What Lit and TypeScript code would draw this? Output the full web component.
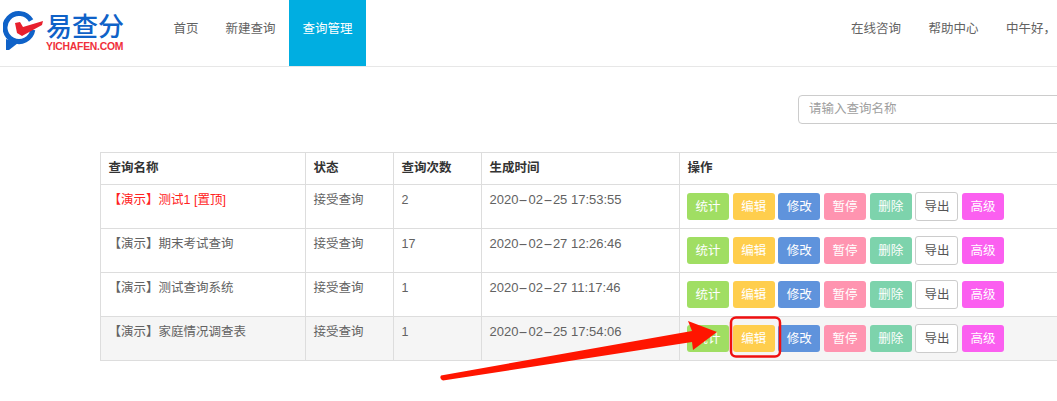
import { LitElement, html, css } from "lit";
import { customElement } from "lit/decorators.js";

const ROWS = [
  { name: "【演示】测试1 [置顶]", count: "2", time: "2020-02-25 17:53:55", top: true },
  { name: "【演示】期末考试查询", count: "17", time: "2020-02-27 12:26:46" },
  { name: "【演示】测试查询系统", count: "1", time: "2020-02-27 11:17:46" },
  { name: "【演示】家庭情况调查表", count: "1", time: "2020-02-25 17:54:06", hover: true },
];
const BTNS = [
  ["统计", "green"], ["编辑", "yellow"], ["修改", "blue"], ["暂停", "pink"],
  ["删除", "teal"], ["导出", "white"], ["高级", "magenta"],
];

@customElement("app-root")
export class AppRoot extends LitElement {
  static styles = css`
    :host {
      display: block; position: relative; width: 1057px; height: 401px; overflow: hidden; background: #fff;
      font-family: "Liberation Sans", "Noto Sans CJK SC", sans-serif; font-size: 12.5px; color: #626262;
    }
    header { display: flex; height: 66px; border-bottom: 1px solid #e7e7e7; }
    .logo { width: 160px; flex: none; display: flex; padding: 8px 0 0 3px; box-sizing: border-box; height: 66px; }
    .logo svg { flex: none; }
    .brand { display: flex; flex-direction: column; }
    .cn { font-family: "Noto Sans CJK SC", sans-serif; font-size: 26px; line-height: 27px; height: 30px; font-weight: 500; color: #0f62c8; margin-top: 3px; }
    .en { font-size: 10.4px; line-height: 10px; color: #f0303a; font-weight: 700; margin-top: 1px; letter-spacing: -0.25px; }
    nav { display: flex; align-items: stretch; }
    .item { padding: 0 13.5px; line-height: 58px; height: 66px; box-sizing: border-box; white-space: nowrap; }
    .item.on { background: #00aee1; color: #fff; }
    .right { margin-left: auto; margin-right: 1px; display: flex; }
    .right .item { padding: 0 0 0 27.5px; }
    .main { padding: 28px 0 0 100px; }
    .search { margin-left: 698px; width: 300px; height: 29px; border: 1px solid #ccc; border-radius: 4px; box-sizing: border-box; padding-left: 10px; line-height: 26px; color: #a0a0a0; }
    table { border-collapse: collapse; table-layout: fixed; width: 1000px; margin-top: 28px; }
    th, td { border: 1px solid #ddd; padding: 0 7.5px; text-align: left; vertical-align: top; box-sizing: border-box; }
    th { height: 32px; font-weight: 700; color: #333; line-height: 30px; }
    td { height: 44px; line-height: 30px; }
    tr.top .n { color: #f22; }
    tr.hover td { background: #f5f5f5; }
    .t { font-size: 13px; white-space: nowrap; }
    .h { display: inline-block; width: 10px; text-align: center; transform: scaleX(2.2); }
    td.ops { padding: 8px 0 0 7px; }
    .btns { display: flex; gap: 3.7px; }
    .b { width: 42px; height: 27px; border-radius: 3px; color: #fff; text-align: center; line-height: 28px; box-sizing: border-box; flex: none; }
    .green { background: #a0de63; }
    .yellow { background: #ffce4d; }
    .blue { background: #5f93dc; }
    .pink { background: #ff94b0; }
    .teal { background: #7dd3ac; }
    .white { background: #fff; border: 1px solid #ccc; color: #555; width: 43px; height: 29px; margin-top: -1px; }
    .magenta { background: #fb5ff0; }
    .arrow { position: absolute; left: 0; top: 0; pointer-events: none; }
  `;

  private time(t: string) {
    const parts = t.split("-");
    return parts.map((p, i) => html`${i ? html`<span class="h">-</span>` : ""}${p}`);
  }

  render() {
    return html`
      <header>
        <div class="logo">
          <svg width="43" height="46" viewBox="0 0 43 46">
            <path d="M29.800 21.900A14 14 0 1 1 28.100 12.500" fill="none" stroke="#0f62c8" stroke-width="5"/>
            <path d="M3 31V42H6L15 35z" fill="#0f62c8"/>
            <path d="M12 15L17 14 20 19 40 13 39 17 19 28 14 25z" fill="#e8202e"/>
          </svg>
          <div class="brand"><div class="cn">易查分</div><div class="en">YICHAFEN.COM</div></div>
        </div>
        <nav>
          <div class="item">首页</div>
          <div class="item">新建查询</div>
          <div class="item on">查询管理</div>
        </nav>
        <div class="right">
          <div class="item">在线咨询</div>
          <div class="item">帮助中心</div>
          <div class="item">中午好，</div>
        </div>
      </header>
      <div class="main">
        <div class="search">请输入查询名称</div>
        <table>
          <colgroup><col style="width:205px"><col style="width:88px"><col style="width:88px"><col style="width:198px"><col></colgroup>
          <thead><tr><th>查询名称</th><th>状态</th><th>查询次数</th><th>生成时间</th><th>操作</th></tr></thead>
          <tbody>
            ${ROWS.map(r => html`<tr class="${r.top ? "top" : r.hover ? "hover" : ""}">
              <td class="n">${r.name}</td><td>接受查询</td><td>${r.count}</td><td class="t">${this.time(r.time)}</td>
              <td class="ops"><div class="btns">${BTNS.map(([l, c]) => html`<div class="b ${c}">${l}</div>`)}</div></td>
            </tr>`)}
          </tbody>
        </table>
      </div>
      <svg class="arrow" width="1057" height="401" viewBox="0 0 1057 401">
        <path d="M441 375.500L692 331 688 321 717 332 693 350 692 342 443 380.500Q439 379 441 375.500z" fill="#ff1500"/>
        <rect x="731" y="317.500" width="49" height="39" rx="5" fill="none" stroke="#f01010" stroke-width="2.500"/>
      </svg>
    `;
  }
}
